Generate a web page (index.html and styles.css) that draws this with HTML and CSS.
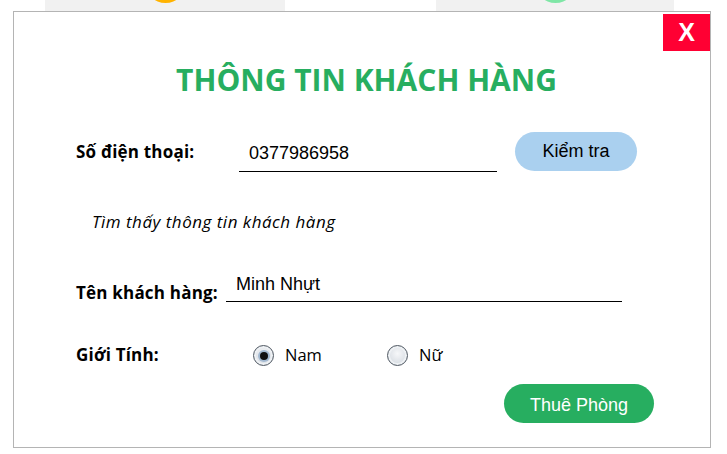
FILE: index.html
```html
<!DOCTYPE html>
<html lang="vi">
<head>
<meta charset="utf-8">
<link rel="stylesheet" href="styles.css">
</head>
<body>
<div class="strip">
  <div class="tile"><div class="dot dot-yellow"></div></div>
  <div class="tile tile-2"><div class="dot dot-green"></div></div>
</div>
<div class="dialog">
  <div class="close">X</div>
  <h1 class="title">THÔNG TIN KHÁCH HÀNG</h1>
  <div class="row row-phone">
    <div class="label label-phone">Số điện thoại:</div>
    <div class="field field-phone">0377986958</div>
    <div class="btn btn-check">Kiểm tra</div>
  </div>
  <div class="found">Tìm thấy thông tin khách hàng</div>
  <div class="row row-name">
    <div class="label label-name">Tên khách hàng:</div>
    <div class="field field-name">Minh Nhựt</div>
  </div>
  <div class="row row-gender">
    <div class="label label-gender">Giới Tính:</div>
    <div class="option option-male"><span class="radio checked"></span><span class="opt-text">Nam</span></div>
    <div class="option"><span class="radio"></span><span class="opt-text">Nữ</span></div>
  </div>
  <div class="row row-submit">
    <div class="btn btn-rent">Thuê Phòng</div>
  </div>
</div>
</body>
</html>
```
FILE: styles.css
```css
html, body {
  margin: 0;
  padding: 0;
  background: #ffffff;
}
body {
  width: 727px;
  height: 454px;
  overflow: hidden;
  font-family: "Open Sans", "Noto Sans", sans-serif;
  color: #000;
}
.strip {
  display: flex;
  height: 11px;
  padding-left: 45px;
}
.tile {
  width: 240px;
  height: 11px;
  background: #f1f1f1;
  display: flex;
  justify-content: center;
  overflow: hidden;
}
.tile-2 {
  margin-left: 151px;
  width: 238px;
}
.dot {
  width: 41px;
  height: 41px;
  border-radius: 50%;
  margin-top: -38px;
  flex: none;
}
.dot-yellow { background: #ffb300; }
.dot-green { background: #7fe6a6; }

.dialog {
  position: relative;
  margin-left: 13px;
  width: 698px;
  height: 437px;
  box-sizing: border-box;
  border: 1px solid #b4b4b4;
  background: #fff;
}
.close {
  position: absolute;
  top: 2px;
  right: 0;
  width: 47px;
  height: 37px;
  background: #ff0033;
  color: #fff;
  font: bold 25px/37px "Liberation Sans", Arial, sans-serif;
  text-align: center;
}
.title {
  margin: 49px 0 0 0;
  padding-left: 9px;
  text-align: center;
  font-size: 30px;
  line-height: 38px;
  font-weight: 700;
  color: #27ae60;
}
.row {
  display: flex;
  padding-left: 62px;
}
.label {
  font-weight: 700;
  font-size: 17px;
  letter-spacing: 0.2px;
  line-height: 22px;
  flex: none;
}
.row-phone {
  margin-top: 33px;
  height: 40px;
  align-items: center;
}
.label-phone { width: 163px; }
.field {
  font-family: "Liberation Sans", Arial, sans-serif;
  font-size: 18px;
  line-height: 22px;
  border-bottom: 1px solid #000;
  padding-left: 10px;
  box-sizing: border-box;
  flex: none;
}
.field-phone {
  width: 258px;
  align-self: flex-end;
  padding-bottom: 7px;
}
.btn {
  font-family: "Liberation Sans", Arial, sans-serif;
  font-size: 18px;
  height: 39px;
  line-height: 39px;
  box-sizing: border-box;
  border-radius: 20px;
  text-align: center;
  flex: none;
}
.btn-check {
  margin-left: 18px;
  width: 122px;
  background: #aad0ef;
  color: #000;
  align-self: flex-start;
}
.found {
  margin-top: 39px;
  padding-left: 78px;
  font-style: italic;
  font-size: 17px;
  letter-spacing: 0.5px;
  line-height: 22px;
}
.row-name {
  margin-top: 39px;
  height: 30px;
  align-items: flex-end;
}
.label-name {
  width: 150px;
  line-height: 18px;
}
.field-name {
  width: 396px;
  padding-bottom: 6px;
}
.row-gender {
  margin-top: 42px;
  height: 22px;
  align-items: center;
}
.label-gender { width: 177px; }
.option {
  display: flex;
  align-items: center;
  flex: none;
}
.option-male { width: 134px; }
.radio {
  width: 19px;
  height: 19px;
  border-radius: 50%;
  border: 1px solid #4f5862;
  background: radial-gradient(circle at 50% 40%, #f6f7f9 0%, #dfe3e8 55%, #c4cbd3 100%);
  box-shadow: inset 0 0 0 2px #eef1f4;
  display: flex;
  align-items: center;
  justify-content: center;
  margin-top: 1px;
  flex: none;
}
.radio.checked::after {
  content: "";
  width: 8px;
  height: 8px;
  border-radius: 50%;
  background: #111;
  box-shadow: 0 0 0 2px #a3b9d1;
}
.opt-text {
  margin-left: 11px;
  font-size: 16.5px;
  line-height: 22px;
}
.row-submit {
  margin-top: 18px;
  justify-content: flex-end;
  padding-right: 56px;
}
.btn-rent {
  width: 150px;
  background: #27ae60;
  color: #fff;
  padding-top: 4px;
  line-height: 35px;
}
```
